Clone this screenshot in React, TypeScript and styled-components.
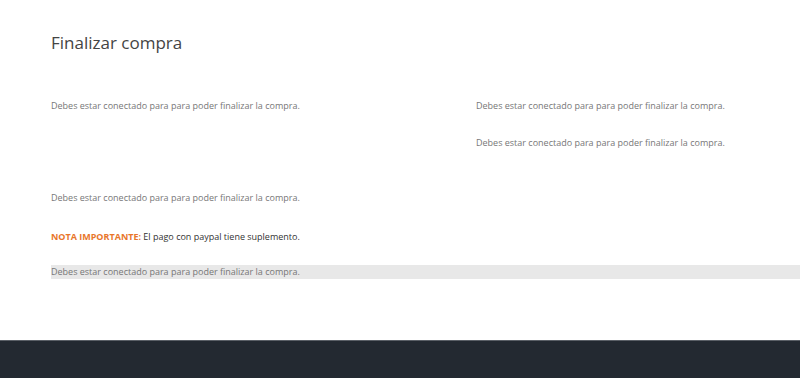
import React from "react";
import styled, { createGlobalStyle } from "styled-components";

const GlobalStyle = createGlobalStyle`
  html, body {
    margin: 0;
    padding: 0;
    background: #ffffff;
    overflow: hidden;
  }
  body {
    font-family: "Open Sans", "Liberation Sans", sans-serif;
    width: 800px;
    height: 378px;
  }
`;

const Page = styled.div`
  display: flex;
  flex-direction: column;
  height: 378px;
`;

const Main = styled.main`
  flex: 1;
  padding: 31px 0 0 51px;
`;

const Title = styled.h1`
  margin: 0 0 44px;
  font-size: 17px;
  font-weight: 400;
  color: #444444;
  line-height: 24px;
`;

const Columns = styled.div`
  display: grid;
  grid-template-columns: 425px 1fr;
`;

const Column = styled.div`
  display: flex;
  flex-direction: column;
  gap: 23px;
`;

const Notice = styled.p<{ $shaded?: boolean }>`
  margin: 0;
  font-size: 9px;
  line-height: 14px;
  color: #777777;
  background: ${(p) => (p.$shaded ? "#e8e8e8" : "transparent")};
`;

const Stack = styled.div`
  display: flex;
  flex-direction: column;
  gap: 25px;
  margin-top: 41px;
`;

const Note = styled.p`
  margin: 0 0 -4px;
  font-size: 9px;
  line-height: 14px;
  color: #333333;
`;

const Highlight = styled.strong`
  color: #e8762b;
  font-weight: 700;
`;

const Footer = styled.footer`
  height: 37px;
  background: #232931;
  border-top: 1px solid #5a5f66;
`;

const message = "Debes estar conectado para para poder finalizar la compra.";

export default function App() {
  return (
    <>
      <GlobalStyle />
      <Page>
        <Main>
          <Title>Finalizar compra</Title>
          <Columns>
            <Column>
              <Notice>{message}</Notice>
            </Column>
            <Column>
              <Notice>{message}</Notice>
              <Notice>{message}</Notice>
            </Column>
          </Columns>
          <Stack>
            <Notice>{message}</Notice>
            <Note>
              <Highlight>NOTA IMPORTANTE:</Highlight> El pago con paypal tiene
              suplemento.
            </Note>
            <Notice $shaded>{message}</Notice>
          </Stack>
        </Main>
        <Footer />
      </Page>
    </>
  );
}
